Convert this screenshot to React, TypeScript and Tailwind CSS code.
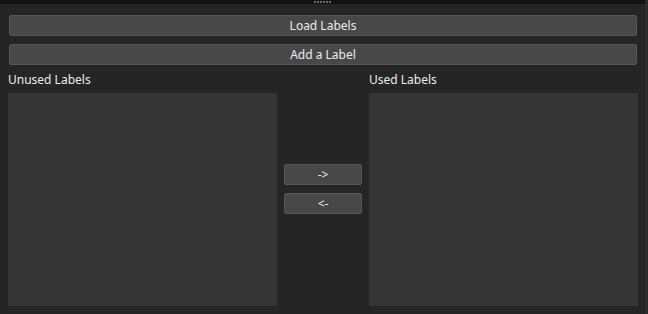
import React from 'react';

const font = { fontFamily: '"Noto Sans", "Open Sans", "DejaVu Sans", sans-serif' };

const WideButton = ({ label }: { label: string }) => (
  <button className="mx-[1px] h-[21px] bg-[#484848] border border-[#565656] rounded-[2px] text-[12px] leading-none text-[#ececec] flex items-center justify-center">
    {label}
  </button>
);

const SmallButton = ({ label }: { label: string }) => (
  <button className="w-[78px] h-[21px] bg-[#484848] border border-[#565656] rounded-[2px] text-[12px] leading-none text-[#ececec] flex items-center justify-center">
    {label}
  </button>
);

const LabelList = ({ title }: { title: string }) => (
  <div className="flex flex-col w-[269px]">
    <div className="h-[16px] flex items-center text-[12px] text-[#ececec] leading-none">{title}</div>
    <div className="mt-[5px] h-[213px] bg-[#353535]" />
  </div>
);

export default function App() {
  return (
    <div className="w-[648px] h-[314px] bg-[#252525] flex flex-col overflow-hidden border-r-[3px] border-[#2c2c2c]" style={font}>
      <div className="h-[4px] bg-[#121212] flex items-start justify-center pt-[1px] gap-[1px]">
        {[0, 1, 2, 3, 4, 5].map((i) => (
          <div key={i} className="w-[2px] h-[2px] bg-[#6a6a6a]" />
        ))}
      </div>
      <div className="flex flex-col pl-[8px] pr-[7px] pt-[11px] gap-[8px]">
        <WideButton label="Load Labels" />
        <WideButton label="Add a Label" />
      </div>
      <div className="flex flex-row pl-[8px] pr-[7px] mt-[7px]">
        <LabelList title="Unused Labels" />
        <div className="w-[92px] flex flex-col items-center justify-center gap-[8px]">
          <SmallButton label="->" />
          <SmallButton label="<-" />
        </div>
        <LabelList title="Used Labels" />
      </div>
    </div>
  );
}
